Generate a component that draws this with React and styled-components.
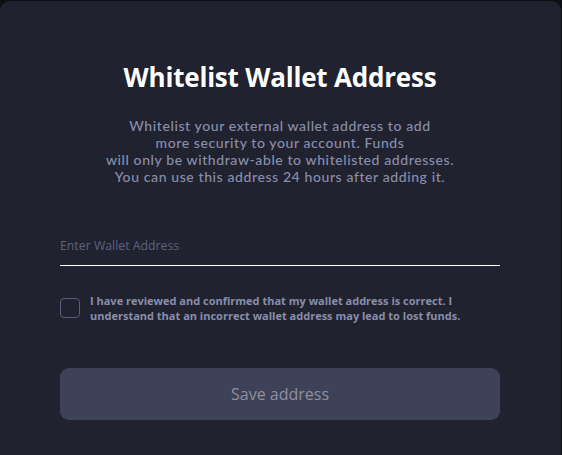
import React, {useState} from 'react';
import styled, {createGlobalStyle} from 'styled-components';

const GlobalStyle = createGlobalStyle`
  html, body {
    margin: 0;
    padding: 0;
    background: #0e0f14;
  }
  body {
    font-family: "Open Sans", "Lato", sans-serif;
  }
`;

const App = () => {
    const [address, setAddress] = useState('');
    const [checked, setChecked] = useState(false);

    return (
        <>
            <GlobalStyle />
            <Card>
                <Title>Whitelist Wallet Address</Title>
                <Description>
                    Whitelist your external wallet address to add<br />
                    more security to your account. Funds<br />
                    will only be withdraw-able to whitelisted addresses.<br />
                    You can use this address 24 hours after adding it.
                </Description>
                <AddressInput
                    type="text"
                    placeholder="Enter Wallet Address"
                    value={address}
                    onChange={(e) => setAddress(e.target.value)}
                />
                <ConfirmRow>
                    <CheckBox checked={checked} onClick={() => setChecked(!checked)} />
                    <ConfirmText>
                        I have reviewed and confirmed that my wallet address is correct. I<br />
                        understand that an incorrect wallet address may lead to lost funds.
                    </ConfirmText>
                </ConfirmRow>
                <SaveButton disabled={!checked || !address}>Save address</SaveButton>
            </Card>
        </>
    );
};

const Card = styled.div`
  box-sizing: border-box;
  width: 561px;
  height: 470px;
  margin-top: 1px;
  padding: 59px 61px 0 60px;
  background: #20232f;
  border-radius: 10px;
  display: flex;
  flex-direction: column;
  align-items: stretch;
`;

const Title = styled.h1`
  margin: 0;
  text-align: center;
  color: #ffffff;
  font-size: 26px;
  font-weight: 700;
  letter-spacing: -0.2px;
  line-height: 34px;
`;

const Description = styled.p`
  margin: 23px 0 0;
  text-align: center;
  color: #8a8dab;
  font-family: "Lato", "Open Sans", sans-serif;
  font-size: 14px;
  font-weight: 500;
  letter-spacing: 0.6px;
  line-height: 17px;
`;

const AddressInput = styled.input`
  margin-top: 53px;
  padding: 0 0 11px;
  background: transparent;
  border: none;
  border-bottom: 1.5px solid #ffffff;
  color: #ffffff;
  font-family: inherit;
  font-size: 12.3px;
  line-height: 16px;
  outline: none;

  &::placeholder {
    color: #5d6080;
  }
`;

const ConfirmRow = styled.div`
  display: flex;
  align-items: center;
  gap: 10px;
  margin-top: 27px;
`;

const CheckBox = styled.div`
  box-sizing: border-box;
  flex: 0 0 20px;
  width: 20px;
  height: 20px;
  border: 1.5px solid #5a5e7c;
  border-radius: 4px;
  background: ${(p) => (p.checked ? '#5a5e7c' : 'transparent')};
  cursor: pointer;
`;

const ConfirmText = styled.p`
  margin: 0;
  color: #8a8dab;
  font-size: 11px;
  font-weight: 700;
  line-height: 15px;
`;

const SaveButton = styled.button`
  margin-top: 45px;
  height: 52px;
  border: none;
  border-radius: 9px;
  background: #3e4259;
  color: #8e90a0;
  font-family: inherit;
  font-size: 16px;
  font-weight: 500;
  cursor: pointer;

  &:disabled {
    cursor: default;
  }
`;

export default App;
